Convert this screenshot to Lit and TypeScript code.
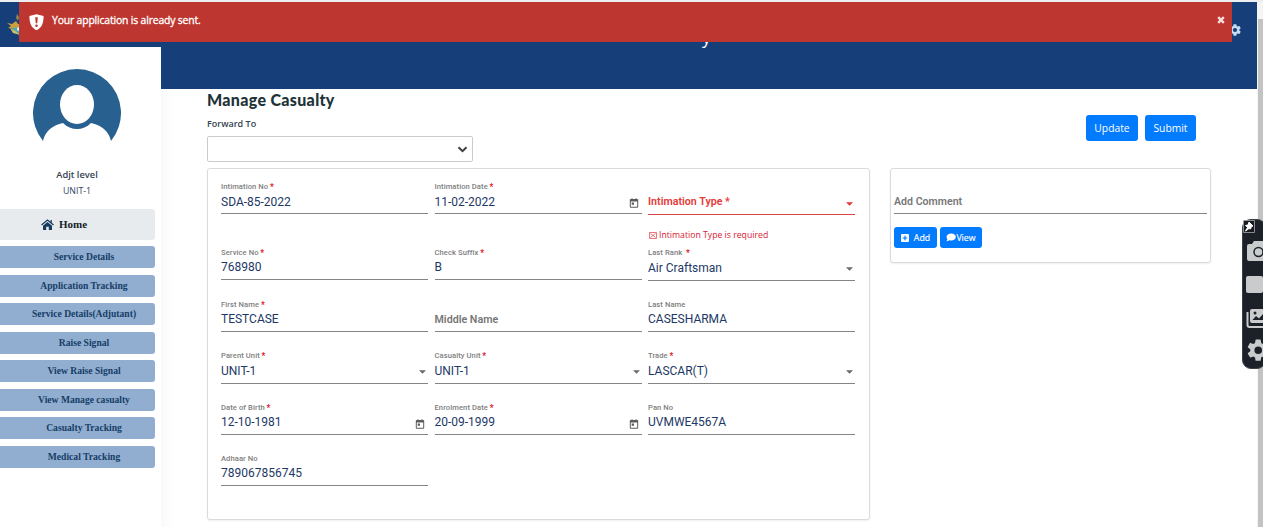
import { LitElement, html, css, svg, nothing } from "lit";
import { customElement } from "lit/decorators.js";

interface Field {
  label: string;
  value?: string;
  required?: boolean;
  kind?: "date" | "select";
  low?: boolean;
  drop?: boolean;
  error?: string;
}

const FIELDS: Field[] = [
  { label: "Intimation No", value: "SDA-85-2022", required: true, drop: true },
  { label: "Intimation Date", value: "11-02-2022", required: true, kind: "date", drop: true },
  { label: "Intimation Type", required: true, kind: "select", low: true, error: "Intimation Type is required" },
  { label: "Service No", value: "768980", required: true },
  { label: "Check Suffix", value: "B", required: true },
  { label: "Last Rank ", value: "Air Craftsman", required: true, kind: "select", low: true, drop: true },
  { label: "First Name", value: "TESTCASE", required: true },
  { label: "Middle Name" },
  { label: "Last Name", value: "CASESHARMA" },
  { label: "Parent Unit", value: "UNIT-1", required: true, kind: "select" },
  { label: "Casualty Unit", value: "UNIT-1", required: true, kind: "select" },
  { label: "Trade", value: "LASCAR(T)", required: true, kind: "select" },
  { label: "Date of Birth", value: "12-10-1981", required: true, kind: "date" },
  { label: "Enrolment Date", value: "20-09-1999", required: true, kind: "date" },
  { label: "Pan No", value: "UVMWE4567A" },
  { label: "Adhaar No", value: "789067856745" },
];

const MENU = [
  "Service Details",
  "Application Tracking",
  "Service Details(Adjutant)",
  "Raise Signal",
  "View Raise Signal",
  "View Manage casualty",
  "Casualty Tracking",
  "Medical Tracking",
];

const GEAR = "M19.4 13c0-.3.1-.6.1-1s0-.7-.1-1l2.1-1.6c.2-.2.3-.4.1-.7l-2-3.4c-.1-.2-.4-.3-.6-.2l-2.5 1c-.5-.4-1.1-.7-1.7-1l-.4-2.6c0-.2-.2-.5-.5-.5h-4c-.3 0-.4.2-.5.5L9 5.1c-.6.3-1.2.6-1.7 1l-2.500-1c-.2-.1-.5 0-.6.2l-2 3.400c-.1.3 0 .5.1.7L4.500 11v2l-2.200 1.600c-.2.2-.2.4-.1.7l2 3.400c.1.2.4.3.6.2l2.500-1c.5.4 1.100.7 1.700 1l.4 2.600c.1.3.2.5.5.5h4c.3 0 .5-.2.5-.5l.4-2.600c.6-.3 1.200-.6 1.700-1l2.500 1c.2.1.5 0 .6-.2l2-3.400c.1-.3.1-.5-.1-.7zM12 15.600a3.600 3.600 0 1 1 0-7.200 3.600 3.600 0 0 1 0 7.200z";

@customElement("app-root")
export class AppRoot extends LitElement {
  static styles = css`
    :host { display: block; position: relative; width: 1263px; height: 527px; overflow: hidden; background: #fff; font-family: "Open Sans", sans-serif; }
    * { box-sizing: border-box; }
    svg { display: block; flex: none; }
    .shell { display: flex; height: 527px; border-top: 2px solid #eceef1; }
    .left { width: 161px; flex: none; display: flex; flex-direction: column; }
    .brand { height: 45px; background: #163e78; padding: 11px 0 0 7px; }
    .profile { display: flex; flex-direction: column; align-items: center; height: 162px; padding: 22px 7px 0 0; }
    .name { margin-top: 24px; font-size: 9.3px; line-height: 14px; font-weight: 600; color: #36424f; }
    .unit { margin-top: 3px; font-size: 8.8px; line-height: 13px; color: #33445c; }
    .home { width: 155px; height: 31px; background: #e8ebee; border-radius: 0 3px 3px 0; display: flex; align-items: center; padding: 0 0 1px 41px; gap: 5px; font: bold 11px "Liberation Serif", serif; color: #151d27; }
    .menu { display: grid; grid-auto-rows: 28.57px; padding-top: 6px; }
    .item { width: 155px; height: 22px; border-radius: 0 3px 3px 0; background: #91add0; padding-left: 13px; text-align: center; font: bold 9.6px/22px "Liberation Serif", serif; color: #163e66; }
    .main { width: 1096px; flex: none; display: flex; flex-direction: column; }
    .hero { height: 87px; flex: none; background: #163e78; color: #fff; font: 18px/24px "Open Sans", sans-serif; padding: 23px 0 0 541px; }
    .content { flex: 1; display: grid; grid-template-columns: 663px 321px; column-gap: 20px; padding-left: 46px; background: linear-gradient(90deg, #f9fafa, #fdfdfd 9px, #fff 12px); align-content: start; grid-template-rows: 79px 352px; }
    .title { font: 900 16px/22px Lato, sans-serif; letter-spacing: 0.32px; color: #1d3338; }
    .forward { font-size: 9px; line-height: 14px; margin-top: 6px; font-weight: 600; color: #34424e; }
    .dropdown { width: 266px; height: 26px; margin-top: 5px; border: 1px solid #c9ccce; border-radius: 2px; display: flex; align-items: center; justify-content: flex-end; padding-right: 4px; }
    .actions { display: flex; justify-content: flex-end; padding: 26px 15px 0 0; gap: 7px; }
    .btn { background: #037bff; color: #fff; border-radius: 3px; display: flex; align-items: center; justify-content: center; }
    .big { height: 26px; width: 52px; font-size: 10.3px; }
    .submit { width: 51px; }
    .card { border: 1px solid #d9dbdd; border-radius: 3px; box-shadow: 0 1px 2px #0001; background: #fff; }
    .form { display: grid; grid-template-columns: repeat(3, 207px); column-gap: 6.5px; grid-template-rows: 66px 52px 51px 52px 51px 32px; align-content: start; padding: 13px 0 0 13px; font-family: Roboto, sans-serif; }
    .field { height: 32px; border-bottom: 1px solid #858585; display: flex; flex-direction: column; }
    .field.low, .field.select { height: 33px; }
    .label { height: 10px; line-height: 10px; font-size: 7.6px; letter-spacing: 0.08px; font-weight: 500; color: #808080; white-space: pre; }
    .star { color: #e01525; font-weight: 700; }
    .label .star { font-size: 8.5px; line-height: 8px; vertical-align: -1px; margin-left: -0.4px; }
    .row { flex: 1; display: flex; justify-content: space-between; font-size: 12px; line-height: 20px; color: #1d3866; }
    .value { white-space: nowrap; margin-top: -1px; }
    .select .value, .drop .value { margin-top: 0; }
    .value.empty { font-size: 10.7px; font-weight: 600; color: #777; margin-top: 0; }
    .bad { border-color: #d84343; }
    .bad .value.empty, .bad .star { color: #e53a37; }
    .error { flex: none; height: 12px; margin: 14px 0 0 1px; display: flex; align-items: center; gap: 2px; font: 8.7px/12px "Open Sans", sans-serif; color: #dc1730; }
    .caret { margin: 9px 2px 0 0; }
    .low .caret { margin-top: 10px; }
    .low.drop .caret { margin-top: 9px; }
    .cal { margin: 6px 3px 0 0; }
    .comment { height: 95px; padding: 23px 3px 0; }
    .prompt { height: 22px; border-bottom: 1px solid #858585; font: 600 10.6px/20px Roboto, sans-serif; color: #777; }
    .buttons { display: flex; gap: 3px; margin-top: 13px; }
    .small { height: 21px; width: 43px; font-size: 8.8px; gap: 5px; -webkit-text-stroke: 0.15px #fff; }
    .view { width: 42px; gap: 0; }
    .scroll { width: 6px; padding: 17px 0 0 1px; background: #f5f5f5; }
    .thumb { height: 508px; background: #c3c3c3; }
    .toast { position: absolute; left: 19px; top: 2px; width: 1213px; height: 40px; background: #bd3630; border-radius: 1px; display: flex; align-items: flex-start; padding: 12px 7px 0 10px; color: #fff; font-size: 10.4px; line-height: 13px; }
    .message { flex: 1; margin-left: 8px; letter-spacing: -0.16px; -webkit-text-stroke: 0.3px #fff; }
    .toast .x { margin-top: 2px; }
    .cog { position: absolute; left: 1228px; top: 23px; }
    .tools { position: absolute; left: 1242px; top: 219px; width: 24px; height: 150px; background: #1c2129; border: 1px solid #3b4047; border-radius: 9px; }
  `;

  private icon(kind?: string, bad = false) {
    if (kind === "select")
      return html`<svg class="caret" width="7" height="4" viewBox="0 0 7 4"><path d="M0 .3h7L3.5 3.800z" fill=${bad ? "#e53a37" : "#6b6b6b"}/></svg>`;
    if (kind === "date")
      return html`<svg class="cal" width="10" height="10" viewBox="0 0 9 10"><path d="M1.300 1h.7V.2h1V1h3V.2h1V1h.7q1 0 1 1v6.700q0 1-1 1H1.300q-1 0-1-1V2q0-1 1-1zM1.300 3.500v5.200h6.400V3.500zM2.200 4.500h2.300v2.200H2.200z" fill="#5c5c5c" fill-rule="evenodd"/></svg>`;
    return nothing;
  }

  private field(f: Field) {
    const star = f.required ? html`<span class="star"> *</span>` : nothing;
    const shape = f.low ? "low" : f.kind === "select" ? "select" : "";
    return html`<div>
      <div class="field ${shape} ${f.drop ? "drop" : ""} ${f.error ? "bad" : ""}">
        <div class="label">${f.value ? html`${f.label}${star}` : nothing}</div>
        <div class="row">
          <span class="value ${f.value ? "" : "empty"}">${f.value ?? html`${f.label}${star}`}</span>
          ${this.icon(f.kind, !!f.error)}
        </div>
      </div>
      ${f.error
        ? html`<div class="error"><svg width="8" height="7" viewBox="0 0 8 7" fill="none" stroke="#e35360" stroke-width=".8"><path d="M.5.5h7v6h-7zM1.500 1.500l5 4M6.500 1.500l-5 4"/></svg>${f.error}</div>`
        : nothing}
    </div>`;
  }

  render() {
    return html`
      <div class="shell">
        <div class="left">
          <div class="brand">
            <svg width="14" height="24" viewBox="0 0 14 24"><path d="M0 10l5 1 4-3 2 3h3v4l-7 1-6-1 3-2z" fill="#c99f3b"/><path d="M10 1l2 3-1 4-2-3z" fill="#8f8a50"/><path d="M5 15l9-1v8l-5-2z" fill="#4fa9b5"/><path d="M3 15l4 2 6 5-7-2z" fill="#d6bf61"/><circle cx="12" cy="16" r="2" fill="#e7f0ed"/></svg>
          </div>
          <div class="profile">
            <svg width="88" height="75" viewBox="0 0 88 75"><path d="M10 72A44 44 0 1 1 78 72C76 62 68 56 58 54C50 62 38 62 30 54C20 56 12 62 10 72z" fill="#28608f"/><ellipse cx="44" cy="35.500" rx="17" ry="19.500" fill="#fff"/></svg>
            <div class="name">Adjt level</div>
            <div class="unit">UNIT-1</div>
          </div>
          <div class="home"><svg width="13" height="11" viewBox="0 0 13 11"><path d="M6.500 3L11 6.800V11H7.800V7.800H5.200V11H2V6.800z" fill="#173b5e"/><path d="M.5 6L6.500 1l6 5M10.200 1v3" fill="none" stroke="#173b5e" stroke-width="1.300"/></svg>Home</div>
          <div class="menu">${MENU.map((m) => html`<div class="item">${m}</div>`)}</div>
        </div>
        <div class="main">
          <div class="hero">y</div>
          <div class="content">
            <div class="heading">
              <div class="title">Manage Casualty</div>
              <div class="forward">Forward To</div>
              <div class="dropdown"><svg width="11" height="7" viewBox="0 0 11 7"><path d="M1.500 1.200l4 4 4-4" fill="none" stroke="#3c4043" stroke-width="2"/></svg></div>
            </div>
            <div class="actions"><div class="btn big">Update</div><div class="btn big submit">Submit</div></div>
            <div class="card form">${FIELDS.map((f) => this.field(f))}</div>
            <div class="card comment">
              <div class="prompt">Add Comment</div>
              <div class="buttons">
                <div class="btn small"><svg width="8" height="8" viewBox="0 0 8 8"><rect width="8" height="8" rx="1" fill="#fff"/><path d="M4 1.700v4.600M1.700 4h4.600" stroke="#037bff" stroke-width="1.200"/></svg>Add</div>
                <div class="btn small view"><svg width="10" height="9" viewBox="0 0 10 9"><path d="M5.200.5C7.800.5 9.800 2 9.800 4S7.800 7.600 5.200 7.600c-.7 0-1.300-.1-1.900-.3C2.500 8 1.500 8.300.3 8.300c.7-.7 1-1.500 1.100-2C.9 5.600.6 4.900.6 4 .6 2 2.600.5 5.200.5z" fill="#fff"/></svg>View</div>
              </div>
            </div>
          </div>
        </div>
        <div class="scroll"><div class="thumb"></div></div>
      </div>
      <svg class="cog" width="14" height="14" viewBox="0 0 24 24"><path d=${GEAR} fill="#c5dcf3"/></svg>
      <div class="toast">
        <svg width="15" height="17" viewBox="0 0 15 17"><path d="M7.500.3L14.600 2c0 7-1.600 11.500-7.100 14.300C2 13.500.4 9 .4 2z" fill="#fff"/><path d="M6.200 3.300h2.600l-.5 6H6.700z" fill="#bd3630"/><circle cx="7.500" cy="11.700" r="1.300" fill="#bd3630"/></svg>
        <div class="message">Your application is already sent.</div>
        <svg class="x" width="8" height="8" viewBox="0 0 8 8"><path d="M1.200 1.200l5.600 5.600M6.800 1.200L1.200 6.800" stroke="#f7dedd" stroke-width="2.400"/></svg>
      </div>
      <div class="tools">
        <svg width="22" height="148" viewBox="0 0 22 148">
          <path d="M.5.5h11v12H.500z" fill="#171b20" stroke="#a6a9ac" stroke-width=".8"/>
          <path d="M6 2l4 4-1.500.5L7.500 9 6 8.500 2.500 11 4.500 7.500 2.500 5.500l2.500-.5z" fill="#fff" stroke="#fff"/>
          <path d="M6 24h3l2-3h9l2 3v17H6q-2 0-2-2V26q0-2 2-2z" fill="#c9cbcc"/>
          <circle cx="15.500" cy="32" r="4.500" fill="none" stroke="#1c2129" stroke-width="1.500"/>
          <rect x="3" y="56" width="17" height="17" rx="2" fill="#c9cbcc"/><path d="M19 62l4-3v12l-4-3z" fill="#c9cbcc"/>
          <path d="M4.500 92v13q0 2 2 2H22" fill="none" stroke="#c9cbcc" stroke-width="2"/>
          <path d="M9 89h14v14H9q-2 0-2-2V91q0-2 2-2z" fill="#c9cbcc"/>
          <path d="M9.500 100l3.500-4 3 2.500 4-4.500 3 3v3z" fill="#1c2129"/><circle cx="12" cy="93" r="1.500" fill="#1c2129"/>
          ${svg`<path d=${GEAR} transform="translate(2.500 117.500) scale(1.060)" fill="#c9cbcc"/>`}
        </svg>
      </div>
    `;
  }
}
